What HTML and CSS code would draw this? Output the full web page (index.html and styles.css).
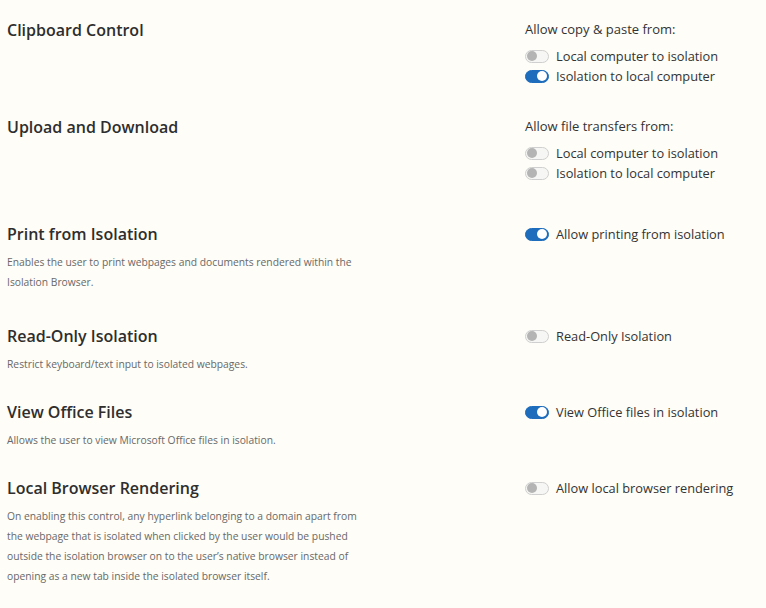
FILE: index.html
```html
<!DOCTYPE html>
<html lang="en">
<head>
<meta charset="utf-8">
<title>Isolation Settings</title>
<link rel="stylesheet" href="styles.css">
</head>
<body>
<main class="page">
  <section class="setting gap-a">
    <div class="info">
      <h2 class="title">Clipboard Control</h2>
    </div>
    <div class="controls">
      <div class="group-label">Allow copy &amp; paste from:</div>
      <div class="toggles">
        <label class="row"><span class="toggle"></span><span class="text">Local computer to isolation</span></label>
        <label class="row"><span class="toggle on"></span><span class="text">Isolation to local computer</span></label>
      </div>
    </div>
  </section>

  <section class="setting gap-b">
    <div class="info">
      <h2 class="title">Upload and Download</h2>
    </div>
    <div class="controls">
      <div class="group-label">Allow file transfers from:</div>
      <div class="toggles">
        <label class="row"><span class="toggle"></span><span class="text">Local computer to isolation</span></label>
        <label class="row"><span class="toggle"></span><span class="text">Isolation to local computer</span></label>
      </div>
    </div>
  </section>

  <section class="setting gap-c">
    <div class="info">
      <h2 class="title">Print from Isolation</h2>
      <p class="desc">Enables the user to print webpages and documents rendered within the Isolation Browser.</p>
    </div>
    <div class="controls single">
      <label class="row"><span class="toggle on"></span><span class="text">Allow printing from isolation</span></label>
    </div>
  </section>

  <section class="setting">
    <div class="info">
      <h2 class="title">Read-Only Isolation</h2>
      <p class="desc">Restrict keyboard/text input to isolated webpages.</p>
    </div>
    <div class="controls single">
      <label class="row"><span class="toggle"></span><span class="text">Read-Only Isolation</span></label>
    </div>
  </section>

  <section class="setting">
    <div class="info">
      <h2 class="title">View Office Files</h2>
      <p class="desc">Allows the user to view Microsoft Office files in isolation.</p>
    </div>
    <div class="controls single">
      <label class="row"><span class="toggle on"></span><span class="text">View Office files in isolation</span></label>
    </div>
  </section>

  <section class="setting">
    <div class="info">
      <h2 class="title">Local Browser Rendering</h2>
      <p class="desc">On enabling this control, any hyperlink belonging to a domain apart from the webpage that is isolated when clicked by the user would be pushed outside the isolation browser on to the user’s native browser instead of opening as a new tab inside the isolated browser itself.</p>
    </div>
    <div class="controls single">
      <label class="row"><span class="toggle"></span><span class="text">Allow local browser rendering</span></label>
    </div>
  </section>
</main>
</body>
</html>
```

FILE: styles.css
```css
* { box-sizing: border-box; }

html, body {
  margin: 0;
  padding: 0;
  background: #fefdf7;
}

body {
  font-family: "Open Sans", "Noto Sans", sans-serif;
  color: #333;
}

.page {
  padding: 19px 0 0 7px;
}

.setting {
  display: flex;
  align-items: flex-start;
  margin-bottom: 27px;
}

.setting.gap-a { margin-bottom: 30px; }
.setting.gap-b { margin-bottom: 40px; }
.setting.gap-c { margin-bottom: 33px; }

.info {
  width: 518px;
  flex: none;
}

.title {
  margin: 0;
  font-size: 16px;
  line-height: 22px;
  font-weight: 600;
  color: #2e2e2e;
}

.desc {
  margin: 7px 0 0;
  width: 356px;
  font-size: 10.3px;
  line-height: 20px;
  color: #686868;
}

.controls {
  flex: 1;
}

.controls.single {
  padding-top: 1px;
}

.group-label {
  font-size: 13px;
  line-height: 20px;
  color: #333;
}

.toggles {
  margin-top: 7px;
}

.row {
  display: flex;
  align-items: center;
  height: 20px;
  font-size: 12.8px;
  color: #333;
}

.toggle {
  position: relative;
  width: 24px;
  height: 13px;
  margin-right: 7px;
  border-radius: 7px;
  border: 1px solid #cfcfcf;
  background: #f6f6f4;
  flex: none;
}

.toggle::after {
  content: "";
  position: absolute;
  top: 0.5px;
  left: 1px;
  width: 10px;
  height: 10px;
  border-radius: 50%;
  background: #b4b4b4;
}

.toggle.on {
  background: #1e6dbd;
  border-color: #1e6dbd;
}

.toggle.on::after {
  left: auto;
  right: 1px;
  background: #fff;
}
```
